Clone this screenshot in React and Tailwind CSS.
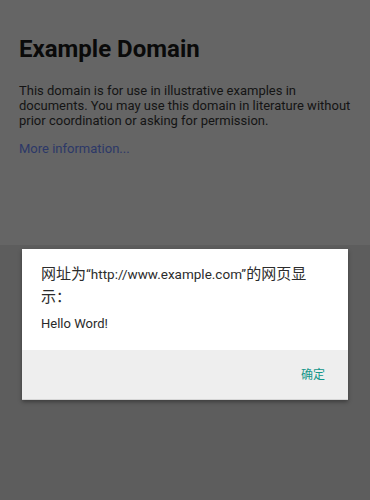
export default function App() {
  return (
    <div className="relative w-[370px] h-[500px] overflow-hidden bg-[#5d5d5d] font-['Roboto','Noto_Sans_CJK_SC',sans-serif]">
      <div className="h-[245px] bg-[#656565] px-[19px] pt-[34px]">
        <h1 className="text-[24px] leading-[30px] font-bold text-[#0a0a0a]">Example Domain</h1>
        <p className="mt-[19px] text-[13px] leading-[15px] text-[#141414]">
          This domain is for use in illustrative examples in documents. You may use this domain in literature without prior coordination or asking for permission.
        </p>
        <a className="block mt-[13px] text-[13px] leading-[15px] text-[#2c3868]">More information...</a>
      </div>

      <div className="absolute left-[22px] top-[249px] w-[326px] bg-white shadow-[0_2px_4px_rgba(0,0,0,0.35)]">
        <div className="pl-[19px] pr-[24px] pt-[14px] pb-[17px]">
          <p className="text-[15px] leading-[23px] text-[#2c2c2c]">
            网址为<span className="text-[13.5px]">“http://www.example.com”</span>的网页显示：
          </p>
          <p className="mt-[6px] text-[13px] leading-[18px] text-[#2a2a2a]">Hello Word!</p>
        </div>
        <div className="h-[50px] bg-[#eeeeee] border-b border-[#d6d6d6] flex items-center justify-end pr-[23px]">
          <span className="text-[12px] text-[#14968a]">确定</span>
        </div>
      </div>
    </div>
  );
}
